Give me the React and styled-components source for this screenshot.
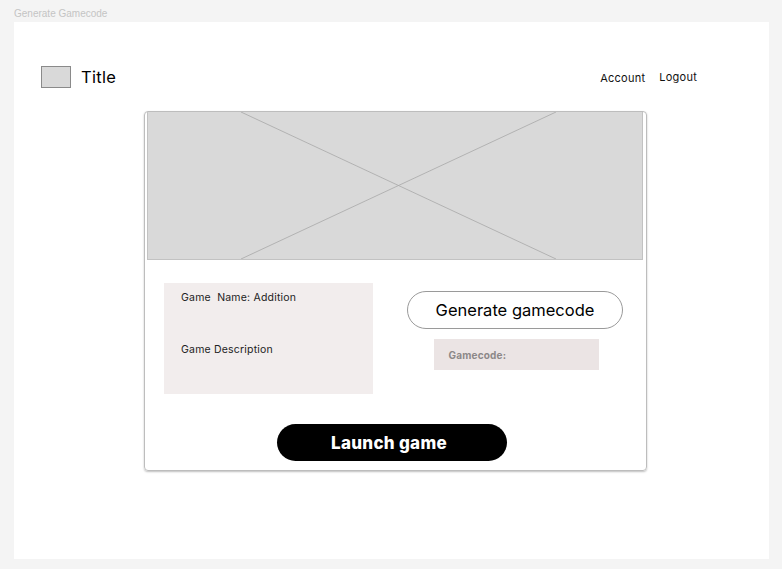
import React from "react";
import styled, { createGlobalStyle } from "styled-components";

const Global = createGlobalStyle`
  html, body { margin: 0; padding: 0; background: #f4f4f4; }
  body { font-family: "Inter", "Noto Sans", sans-serif; }
`;

const Page = styled.div`
  width: 782px;
  height: 569px;
  background: #f4f4f4;
  display: flex;
  flex-direction: column;
  padding: 8px 13px 10px 14px;
  box-sizing: border-box;
`;

const FrameLabel = styled.div`
  font-family: "Liberation Sans", Arial, sans-serif;
  font-size: 10px;
  color: #c4c4c4;
  height: 14px;
  line-height: 12px;
`;

const Frame = styled.div`
  flex: 1;
  background: #ffffff;
  display: flex;
  flex-direction: column;
  padding: 0 0 0 27px;
`;

const Header = styled.header`
  display: flex;
  align-items: center;
  height: 22px;
  margin-top: 44px;
  padding-right: 72px;
`;

const Logo = styled.div`
  width: 30px;
  height: 22px;
  box-sizing: border-box;
  background: #d9d9d9;
  border: 1px solid #8a8a8a;
`;

const Title = styled.div`
  margin-left: 10px;
  font-size: 16.5px;
  color: #000;
  font-weight: 400;
  letter-spacing: 0.3px;
`;

const Nav = styled.nav`
  margin-left: auto;
  display: flex;
  gap: 14px;
  align-items: center;
`;

const NavLink = styled.span`
  font-size: 11px;
  letter-spacing: 0.25px;
  color: #111;
  position: relative;
  top: ${(p) => p.$dy || 0}px;
`;

const Card = styled.div`
  margin: 23px 0 0 103px;
  width: 503px;
  height: 360px;
  box-sizing: border-box;
  border: 1px solid #bdbdbd;
  border-radius: 4px;
  box-shadow: 0 1px 2px rgba(0, 0, 0, 0.25);
  display: flex;
  flex-direction: column;
  padding: 0 3px 0 2px;
  overflow: hidden;
`;

const Hero = styled.div`
  height: 148px;
  background: #d9d9d9;
  border: 1px solid #c2c2c2;
  border-top: none;
  box-sizing: border-box;
  svg { display: block; }
`;

const Body = styled.div`
  display: flex;
  padding: 23px 0 0 17px;
`;

const InfoBox = styled.div`
  width: 209px;
  height: 111px;
  background: #f2eded;
  box-sizing: border-box;
  padding: 8px 0 0 17px;
  display: flex;
  flex-direction: column;
`;

const InfoText = styled.div`
  font-size: 10.5px;
  letter-spacing: 0.2px;
  color: #222;
  margin-bottom: ${(p) => p.$mb || 0}px;
  white-space: pre;
`;

const Side = styled.div`
  margin-left: 34px;
  padding-top: 8px;
  display: flex;
  flex-direction: column;
  align-items: center;
  width: 216px;
`;

const GenButton = styled.button`
  width: 216px;
  height: 38px;
  border-radius: 19px;
  border: 1px solid #9a9a9a;
  background: #fff;
  font-family: inherit;
  font-size: 16.5px;
  color: #000;
  padding: 0;
`;

const CodeBox = styled.div`
  margin-top: 10px;
  margin-left: 2px;
  width: 165px;
  height: 31px;
  background: #ebe4e4;
  box-sizing: border-box;
  padding-left: 15px;
  display: flex;
  align-items: center;
  font-size: 10px;
  letter-spacing: 0.2px;
  font-weight: 700;
  color: #8c8888;
`;

const Footer = styled.div`
  display: flex;
  padding: 30px 0 0 130px;
`;

const LaunchButton = styled.button`
  width: 230px;
  height: 37px;
  border-radius: 19px;
  border: none;
  background: #000;
  color: #fff;
  font-family: inherit;
  font-size: 17px;
  letter-spacing: 0.3px;
  font-weight: 800;
  padding: 0 6px 0 0;
`;

export default function App() {
  return (
    <>
      <Global />
      <Page>
        <FrameLabel>Generate Gamecode</FrameLabel>
        <Frame>
          <Header>
            <Logo />
            <Title>Title</Title>
            <Nav>
              <NavLink $dy={1}>Account</NavLink>
              <NavLink>Logout</NavLink>
            </Nav>
          </Header>
          <Card>
            <Hero>
              <svg width="496" height="147" viewBox="0 0 496 147">
                <line x1="93" y1="0" x2="408" y2="147" stroke="#a8a8a8" strokeWidth="0.8" />
                <line x1="408" y1="0" x2="93" y2="147" stroke="#a8a8a8" strokeWidth="0.8" />
              </svg>
            </Hero>
            <Body>
              <InfoBox>
                <InfoText $mb={39}>{"Game  Name: Addition"}</InfoText>
                <InfoText>Game Description</InfoText>
              </InfoBox>
              <Side>
                <GenButton>Generate gamecode</GenButton>
                <CodeBox>Gamecode:</CodeBox>
              </Side>
            </Body>
            <Footer>
              <LaunchButton>Launch game</LaunchButton>
            </Footer>
          </Card>
        </Frame>
      </Page>
    </>
  );
}
